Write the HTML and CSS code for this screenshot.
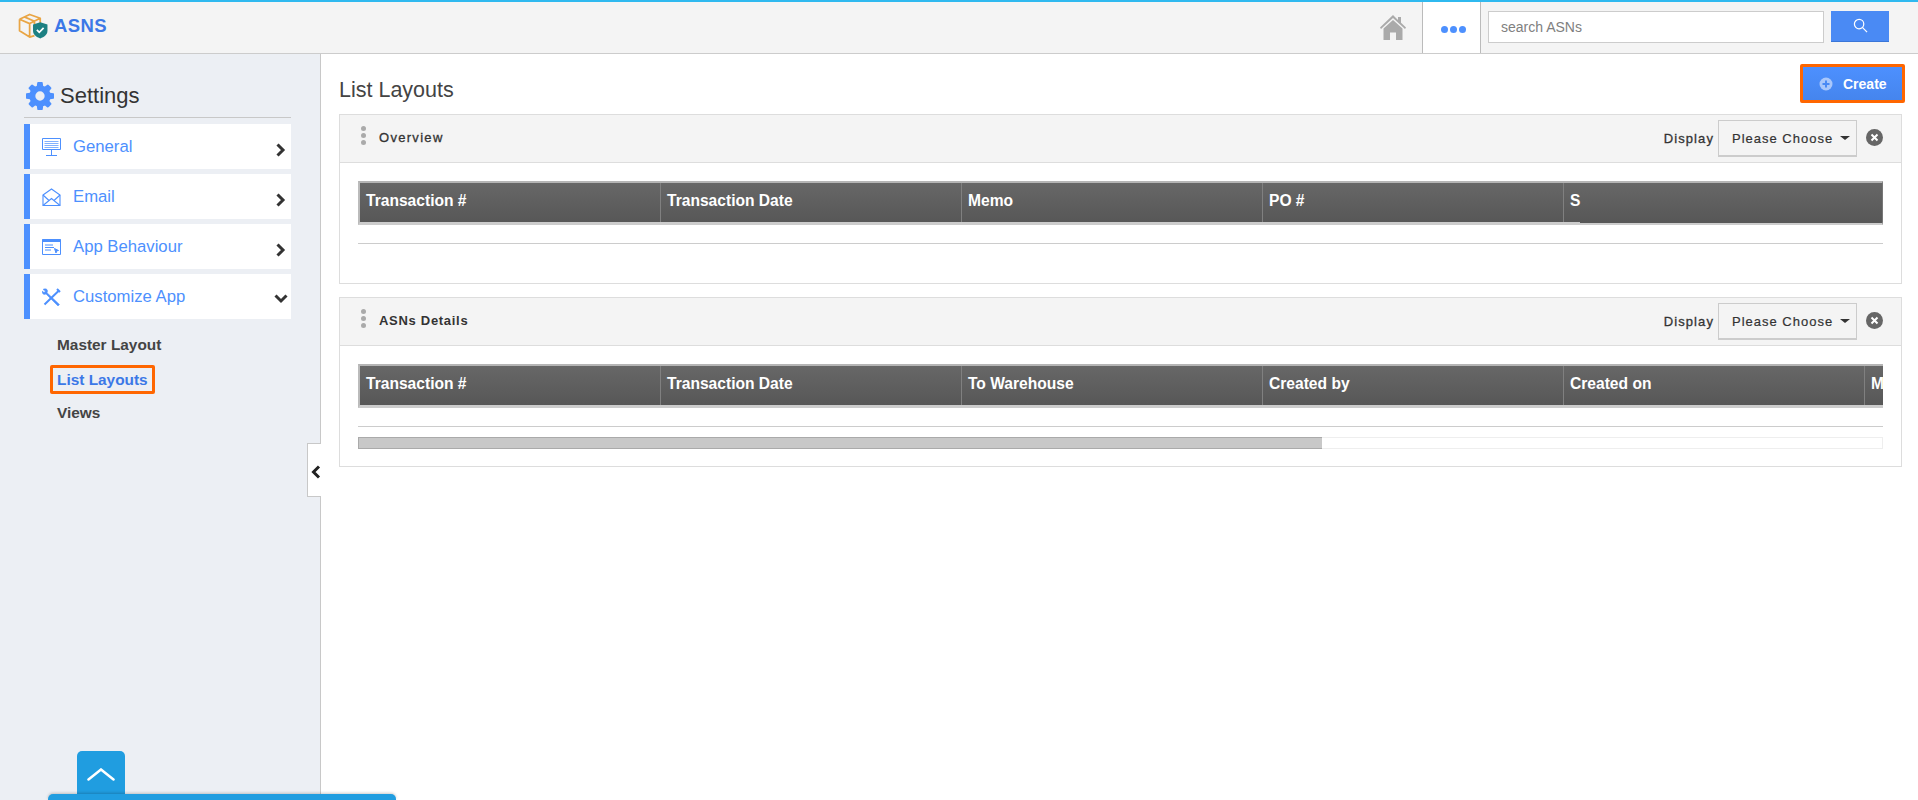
FILE: index.html
```html
<!DOCTYPE html>
<html lang="en">
<head>
    <meta charset="UTF-8">
    <title>ASNS - List Layouts</title>
    <link rel="stylesheet" href="styles.css">
</head>
<body>
    <header class="topbar">
        <a class="brand">
            <svg class="brand-logo" viewBox="0 0 32 27" fill="none">
                <path d="M1.5 6.5 12 1.5l11 4v7M1.5 6.5v12L12 25l5-1.5M1.5 6.5 12 11v14M12 11l11-5.500M6.500 4 17 8.500v3" stroke="#e9a544" stroke-width="1.800" stroke-linejoin="round"/>
                <path d="M23 9.500l7.500 2.500v6.500c0 4-3.500 6.500-7.500 8-4-1.500-7.500-4-7.500-8V12z" fill="#1c8082"/>
                <path d="M19.500 17.500l2.500 2.500 4.500-4.500" stroke="#fff" stroke-width="1.800"/>
            </svg>
            <span>ASNS</span>
        </a>
        <div class="topbar-right">
            <a class="home-link">
                <svg viewBox="0 0 26 25" width="26" height="25">
                    <path d="M13 0 0 12.500l1 1.500L13 3l12 11 1-1.500-5-4.800V2h-3v3z" fill="#aaa"/>
                    <path d="M13 5 3.500 13.500V25H10v-7.500h6V25h6.500V13.500z" fill="#aaa"/>
                </svg>
            </a>
            <a class="more-link"><i></i><i></i><i></i></a>
            <form class="search-form">
                <input type="text" placeholder="search ASNs">
                <button type="button">
                    <svg viewBox="0 0 16 16" width="15" height="15" fill="none" stroke="#fff" stroke-width="1.300">
                        <circle cx="6.500" cy="6.500" r="5"/>
                        <path d="M10 10l5 5"/>
                    </svg>
                </button>
            </form>
        </div>
    </header>

    <div class="page">
        <aside class="sidebar">
            <h2 class="side-title">
                <svg viewBox="0 -128 1536 1536" width="28" height="28">
                    <path fill="#4d90fe" d="M1024 640q0-106-75-181t-181-75-181 75-75 181 75 181 181 75 181-75 75-181zm512-109v222q0 12-8 23t-20 13l-185 28q-19 54-39 91 35 50 107 138 10 12 10 25t-9 23q-27 37-99 108t-94 71q-12 0-26-9l-138-108q-44 23-91 38-16 136-29 186-7 28-36 28h-222q-14 0-24.500-8.500t-11.500-21.500l-28-184q-49-16-90-37l-141 107q-10 9-25 9-14 0-25-11-126-114-165-168-7-10-7-23 0-12 8-23 15-21 51-66.500t54-70.500q-27-50-41-99l-183-27q-13-2-21-12.500t-8-23.500v-222q0-12 8-23t19-13l186-28q14-46 39-92-40-57-107-138-10-12-10-24 0-10 9-23 26-36 98.500-107.500t94.500-71.500q13 0 26 10l138 107q44-23 91-38 16-136 29-186 7-28 36-28h222q14 0 24.500 8.500t11.500 21.500l28 184q49 16 90 37l142-107q9-9 24-9 13 0 25 10 129 119 165 170 7 8 7 22 0 12-8 23-15 21-51 66.500t-54 70.500q26 50 41 98l183 28q13 2 21 12.500t8 23.500z"/>
                </svg>
                <span>Settings</span>
            </h2>
            <ul class="side-menu">
                <li class="side-item">
                    <svg class="side-icon" viewBox="0 0 19 18" fill="none" stroke="#4d90fe">
                        <path d="M.5.500h18v11H.500z"/>
                        <path d="M2.500 3.500h14M2.500 5.500h14M2.500 7.500h14M2.500 9.500h14" stroke-opacity=".7"/>
                        <path d="M9.500 12v5M4 17.500h11"/>
                    </svg>
                    <span class="side-label">General</span>
                    <svg class="side-arrow" viewBox="0 0 10 14" fill="none"><path d="M1.500 1.500 7 7l-5.500 5.500"/></svg>
                </li>
                <li class="side-item">
                    <svg class="side-icon" viewBox="0 0 19 18" fill="none" stroke="#4d90fe" stroke-width="1.100">
                        <path d="M1 7 9.500 1 18 7v10.500H1z"/>
                        <path d="M1 7l6 5.500M18 7l-6 5.500M1 17.500l8.500-7 8.500 7"/>
                    </svg>
                    <span class="side-label">Email</span>
                    <svg class="side-arrow" viewBox="0 0 10 14" fill="none"><path d="M1.500 1.500 7 7l-5.500 5.500"/></svg>
                </li>
                <li class="side-item">
                    <svg class="side-icon" viewBox="0 0 19 18" fill="none" stroke="#4d90fe">
                        <path d="M.5 1.500h18v15H.500z"/>
                        <path d="M.5 2.500h18" stroke-width="3"/>
                        <path d="M3 7h8M3 9.500h9M3 12h6"/>
                        <path d="M12.500 10.500l4 2-2 .5-.5 2z" fill="#4d90fe"/>
                    </svg>
                    <span class="side-label">App Behaviour</span>
                    <svg class="side-arrow" viewBox="0 0 10 14" fill="none"><path d="M1.500 1.500 7 7l-5.500 5.500"/></svg>
                </li>
                <li class="side-item">
                    <svg class="side-icon" viewBox="0 0 19 18" fill="none" stroke="#4d90fe" stroke-width="1.500">
                        <path d="M1 1.500c2-1.500 4.500-.500 4.500 1.500 0 .700-.200 1.200-.500 1.700L17.500 16.500 16 18 4 6c-2 1-4 0-4-3l2 1.500L3.500 3z" fill="#4d90fe" stroke-width=".5"/>
                        <path d="M17 2.500 2.500 16.500M15 1l3 3" stroke-width="2"/>
                    </svg>
                    <span class="side-label">Customize App</span>
                    <svg class="side-arrow side-arrow-down" viewBox="0 0 14 10" fill="none"><path d="M1.500 1.500 7 7l5.500-5.500"/></svg>
                </li>
            </ul>
            <ul class="sub-menu">
                <li>Master Layout</li>
                <li class="active"><span>List Layouts</span></li>
                <li>Views</li>
            </ul>
            <a class="side-toggle">
                <svg viewBox="0 0 10 14" width="10" height="14" fill="none" stroke="#222" stroke-width="3"><path d="M8 1.500 2.500 7 8 12.500"/></svg>
            </a>
        </aside>

        <main class="content">
            <div class="content-head">
                <h1>List Layouts</h1>
                <button class="btn-create" type="button">
                    <svg viewBox="0 0 14 14" width="14" height="14">
                        <circle cx="7" cy="7" r="6.500" fill="#a9c7fb"/>
                        <path d="M7 3.500v7M3.500 7h7" stroke="#4a8af4" stroke-width="2"/>
                    </svg>
                    <span>Create</span>
                </button>
            </div>

            <section class="panel">
                <div class="panel-head">
                    <span class="kebab"><i></i><i></i><i></i></span>
                    <span class="panel-title panel-title-light">Overview</span>
                    <label class="display-label">Display</label>
                    <div class="select-box">Please Choose<b></b></div>
                    <a class="panel-close">
                        <svg viewBox="0 0 17 17" width="17" height="17">
                            <circle cx="8.500" cy="8.500" r="8.500" fill="#666"/>
                            <path d="M5.500 5.500l6 6M11.500 5.500l-6 6" stroke="#fff" stroke-width="2"/>
                        </svg>
                    </a>
                </div>
                <div class="panel-body">
                    <div class="grid-head grid-head-short">
                        <div class="col">Transaction #</div>
                        <div class="col">Transaction Date</div>
                        <div class="col">Memo</div>
                        <div class="col">PO #</div>
                        <div class="col col-last">S</div>
                    </div>
                    <div class="grid-line"></div>
                </div>
            </section>

            <section class="panel">
                <div class="panel-head">
                    <span class="kebab"><i></i><i></i><i></i></span>
                    <span class="panel-title">ASNs Details</span>
                    <label class="display-label">Display</label>
                    <div class="select-box">Please Choose<b></b></div>
                    <a class="panel-close">
                        <svg viewBox="0 0 17 17" width="17" height="17">
                            <circle cx="8.500" cy="8.500" r="8.500" fill="#666"/>
                            <path d="M5.500 5.500l6 6M11.500 5.500l-6 6" stroke="#fff" stroke-width="2"/>
                        </svg>
                    </a>
                </div>
                <div class="panel-body">
                    <div class="grid-head">
                        <div class="col">Transaction #</div>
                        <div class="col">Transaction Date</div>
                        <div class="col">To Warehouse</div>
                        <div class="col">Created by</div>
                        <div class="col">Created on</div>
                        <div class="col">M</div>
                    </div>
                    <div class="grid-line"></div>
                    <div class="scroll-track"><div class="scroll-thumb"></div></div>
                </div>
            </section>
        </main>
    </div>

    <div class="help-dock">
        <a class="help-tab">
            <svg viewBox="0 0 28 13" width="28" height="13" fill="none" stroke="#fff" stroke-width="2.500" stroke-linecap="round"><path d="M1.500 11.500 14 1.500l12.500 10"/></svg>
        </a>
        <div class="help-bar"></div>
    </div>
</body>
</html>
```

FILE: styles.css
```css
* {
    box-sizing: border-box;
}
html, body {
    height: 100%;
}
body {
    margin: 0;
    font-family: "Liberation Sans", Arial, sans-serif;
    color: #333;
    background: #fff;
    display: flex;
    flex-direction: column;
    overflow: hidden;
}
ul {
    list-style: none;
    margin: 0;
    padding: 0;
}

/* top bar */
.topbar {
    height: 54px;
    flex: none;
    display: flex;
    align-items: stretch;
    justify-content: space-between;
    background: #f4f4f4;
    border-top: 2px solid #2fb9ef;
    border-bottom: 1px solid #ccc;
}
.brand {
    display: flex;
    align-items: center;
    gap: 5px;
    padding: 0 0 3px 18px;
    color: #3b78e7;
    font-size: 18.500px;
    font-weight: bold;
    letter-spacing: .4px;
}
.brand-logo {
    width: 31px;
    height: 26px;
}
.topbar-right {
    display: flex;
    align-items: stretch;
}
.home-link {
    width: 42px;
    display: flex;
    align-items: flex-start;
    padding-top: 13px;
}
.more-link {
    width: 59px;
    display: flex;
    align-items: center;
    justify-content: center;
    gap: 2px;
    padding: 3px 0 0 4px;
    background: #fff;
    border-left: 1px solid #bbb;
    border-right: 1px solid #bbb;
}
.more-link i {
    width: 7px;
    height: 7px;
    border-radius: 50%;
    background: #4d90fe;
}
.search-form {
    display: flex;
    gap: 7px;
    padding: 9px 29px 0 7px;
}
.search-form input {
    width: 336px;
    height: 32px;
    padding: 0 12px;
    border: 1px solid #ccc;
    background: #fff;
    font-family: inherit;
    font-size: 14px;
}
.search-form input::placeholder {
    color: #808080;
}
.search-form button {
    width: 58px;
    height: 31px;
    padding: 2px 0 0;
    border: none;
    border-bottom: 1px solid #3a76d8;
    background: #4a8af4;
}

/* sidebar */
.page {
    flex: 1;
    display: flex;
    min-height: 0;
}
.sidebar {
    position: relative;
    width: 321px;
    flex: none;
    padding: 26px 29px 0 24px;
    background: #eceff4;
    border-right: 1px solid #c8c8c8;
}
.side-title {
    display: flex;
    align-items: center;
    gap: 6px;
    height: 38px;
    margin: 0 0 6px;
    padding: 0 0 6px 2px;
    border-bottom: 1px solid #c8c8c8;
    font-size: 22px;
    font-weight: normal;
    color: #333;
}
.side-menu {
    display: flex;
    flex-direction: column;
    gap: 5px;
}
.side-item {
    height: 45px;
    display: flex;
    align-items: center;
    padding-left: 12px;
    background: #fff;
    border-left: 6px solid #4d90fe;
}
.side-icon {
    width: 19px;
    height: 18px;
}
.side-label {
    flex: 1;
    margin-left: 12px;
    color: #4d90fe;
    font-size: 16.700px;
}
.side-arrow {
    width: 10px;
    height: 14px;
    margin: 6px 5px 0 0;
}
.side-arrow path {
    stroke: #333;
    stroke-width: 3;
}
.side-arrow-down {
    width: 14px;
    height: 10px;
    margin: 4px 3px 0 0;
}
.sub-menu {
    padding: 9px 0 0 33px;
    font-size: 15.400px;
    font-weight: bold;
    color: #444;
}
.sub-menu li {
    height: 34px;
    display: flex;
    align-items: center;
}
.sub-menu li.active {
    color: #3b78e7;
}
.sub-menu li.active span {
    margin-left: -7px;
    padding: 3px 4px;
    border: 3px solid #f60;
    border-radius: 2px;
    line-height: 17px;
}
.side-toggle {
    position: absolute;
    top: 389px;
    right: -1px;
    width: 14px;
    height: 54px;
    display: flex;
    align-items: center;
    background: #fff;
    border: 1px solid #c8c8c8;
    border-right: none;
    padding: 4px 0 0 3px;
}

/* main part */
.content {
    flex: 1;
    min-width: 0;
    padding: 0 16px 0 18px;
}
.content-head {
    height: 60px;
    display: flex;
    align-items: flex-start;
    justify-content: space-between;
}
.content-head h1 {
    margin: 24px 0 0;
    font-size: 21.500px;
    line-height: 24px;
    font-weight: normal;
    color: #444;
}
.btn-create {
    width: 105px;
    height: 39px;
    margin: 10px -3px 0 0;
    display: flex;
    align-items: center;
    gap: 10px;
    padding: 0 0 0 16px;
    background: linear-gradient(#4d90fe, #4585ee);
    border: 3px solid #f60;
    border-radius: 2px;
    color: #fff;
    font-family: inherit;
    font-size: 14px;
    font-weight: bold;
}
.panel {
    height: 170px;
    margin-bottom: 13px;
    border: 1px solid #ddd;
}
.panel-head {
    height: 48px;
    display: flex;
    align-items: center;
    padding: 0 18px 0 21px;
    background: #f4f4f4;
    border-bottom: 1px solid #ddd;
}
.kebab {
    display: flex;
    flex-direction: column;
    gap: 2px;
    margin: -6px 0 0;
}
.kebab i {
    width: 5px;
    height: 5px;
    border-radius: 50%;
    background: #aaa;
}
.panel-title {
    flex: 1;
    margin: 0 0 2px 13px;
    font-size: 13px;
    font-weight: bold;
    letter-spacing: .7px;
    color: #333;
}
.panel-title-light {
    font-weight: normal;
    letter-spacing: 1.300px;
    -webkit-text-stroke: .3px #333;
}
.display-label {
    font-size: 13px;
    letter-spacing: 1.100px;
    -webkit-text-stroke: .3px #333;
    margin-right: 4px;
}
.select-box {
    width: 139px;
    height: 37px;
    display: flex;
    align-items: center;
    padding-left: 13px;
    background: #f4f4f4;
    border: 1px solid #ccc;
    border-bottom: 2px solid #ccc;
    font-size: 13px;
    letter-spacing: 1px;
    -webkit-text-stroke: .2px #333;
}
.select-box b {
    width: 0;
    height: 0;
    margin-left: 7px;
    border-top: 4px solid #333;
    border-left: 5px solid transparent;
    border-right: 5px solid transparent;
}
.panel-close {
    display: flex;
    margin: -3px 0 0 9px;
}
.panel-body {
    padding: 18px 18px 0;
}
.grid-head {
    height: 44px;
    display: flex;
    overflow: hidden;
    position: relative;
    background: linear-gradient(#676767, #575757);
    border-top: 2px solid #b5b5b5;
    border-left: 2px solid #bbb;
    border-bottom: 3px solid #ccc;
}
.grid-head-short {
    overflow: visible;
    border-right: 1px solid #777;
}
/* the dark block that covers the bottom line at the end of the first table */
.grid-head-short::after {
    content: "";
    position: absolute;
    left: 1220px;
    right: 0;
    bottom: -1px;
    height: 1px;
    background: #575757;
}
.col {
    width: 301px;
    flex: none;
    display: flex;
    align-items: center;
    padding: 0 0 3px 6px;
    font-size: 15.600px;
    font-weight: bold;
    color: #fff;
    white-space: nowrap;
}
.col:first-child {
    width: 300px;
}
.col + .col {
    border-left: 1px solid #808080;
}
.col-last {
    flex: 1;
}
.grid-line {
    height: 1px;
    margin-top: 18px;
    background: #ccc;
}
.scroll-track {
    height: 12px;
    margin-top: 10px;
    background: #fff;
    border: 1px solid #eee;
}
.scroll-thumb {
    width: 964px;
    height: 12px;
    margin: -1px 0 0 -1px;
    background: #c8c8c8;
    border-top: 1px solid #aaa;
    border-bottom: 1px solid #aaa;
    border-left: 1px solid #aaa;
}

/* help dock at the bottom */
.help-dock {
    position: absolute;
    left: 48px;
    bottom: 0;
    width: 348px;
}
.help-tab {
    width: 48px;
    height: 43px;
    margin-left: 29px;
    display: flex;
    justify-content: center;
    padding-top: 17px;
    background: #209de0;
    border-radius: 5px 5px 0 0;
}
.help-bar {
    height: 6px;
    background: #209de0;
    border-radius: 5px 5px 0 0;
    box-shadow: 0 -1px 3px rgba(0, 0, 0, .2);
}
```
